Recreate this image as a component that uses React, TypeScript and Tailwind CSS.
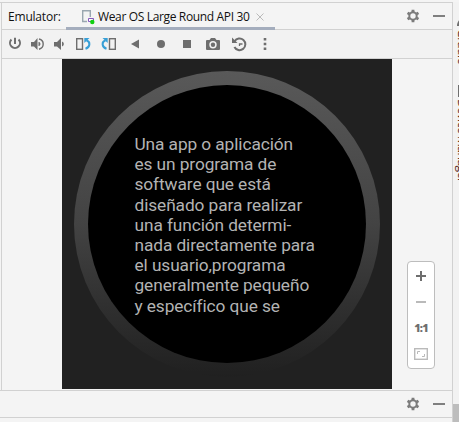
import type { ReactNode } from 'react';

const Icon = ({ children, className = '' }: { children: ReactNode; className?: string }) => (
  <svg viewBox="0 0 16 16" className={`block h-4 w-4 shrink-0 ${className}`} fill="none" stroke="none">
    {children}
  </svg>
);

const GREY = '#6e6e6e';

const PowerIcon = () => (
  <Icon>
    <path d="M4.400 3.500A5 5 0 1 0 11.600 3.500" stroke={GREY} strokeWidth="2" />
    <path d="M8 1.800V8" stroke={GREY} strokeWidth="2" />
  </Icon>
);

const VolumeUpIcon = () => (
  <Icon>
    <path d="M1 6h3l3.500-4v12L4 10.500H1z" fill={GREY} />
    <path d="M9 6.300a2 2 0 0 1 0 3.400z" fill={GREY} stroke={GREY} />
    <path d="M9 3a5.200 5.200 0 0 1 0 10.200" stroke={GREY} strokeWidth="1.400" />
  </Icon>
);

const VolumeDownIcon = () => (
  <Icon>
    <path d="M3 6h3l4-4v12l-4-3.500H3z" fill={GREY} />
    <path d="M11 5.500a2.600 2.600 0 0 1 0 5z" fill={GREY} />
  </Icon>
);

const RotateIcon = ({ flip = false }: { flip?: boolean }) => (
  <Icon>
    <g transform={flip ? 'translate(16 0) scale(-1 1)' : undefined}>
      <rect x="1.700" y="2.700" width="5.800" height="10.600" stroke={GREY} strokeWidth="1.400" />
      <path d="M11.500 4.500C15.500 5.500 15.500 11 10.500 12.800" stroke="#389fd6" strokeWidth="2" />
      <path d="M9.300 2h5.200l-5.200 5z" fill="#389fd6" />
    </g>
  </Icon>
);

const GearIcon = () => (
  <Icon>
    <circle cx="8" cy="8" r="3.700" stroke="#7b7b7b" strokeWidth="2" />
    {[0, 60, 120].map((angle) => (
      <path
        key={angle}
        d="M6.600 1.700h2.800v2.300H6.600zM6.600 12h2.800v2.300H6.600z"
        fill="#7b7b7b"
        transform={`rotate(${angle} 8 8)`}
      />
    ))}
  </Icon>
);

const HeaderActions = () => (
  <div className="ml-auto flex items-center pr-[7px]">
    <GearIcon />
    <div className="ml-3 h-0.5 w-3 bg-[#7f7f7f]" />
  </div>
);

const Header = () => (
  <div className="flex h-[27px] shrink-0 border-b border-[#d1d1d1] pl-1.5 text-[12px] text-[#111]">
    <span className="mt-[5px] w-[58px] leading-[18px] tracking-[-0.2px]">Emulator:</span>
    <div className="-mb-px flex h-[27px] w-[209px] border-b-[3px] border-[#a4adbd] pl-[15px]">
      <svg viewBox="0 0 14 16" className="mt-[6px] h-4 w-3.5 shrink-0" fill="none">
        <path d="M6 12.500H1.700V1.700h7.600V8" stroke="#9aa7b0" strokeWidth="1.400" />
        <path d="M7.500 12.500V9.500h5v3z" stroke="#8557bd" fill="#fff" />
        <circle cx="11.300" cy="13" r="2.200" fill="#10d010" />
      </svg>
      <span className="ml-[3px] mt-[5px] w-[152px] whitespace-nowrap leading-[18px] tracking-[-0.350px]">
        Wear OS Large Round API 30
      </span>
      <svg viewBox="0 0 8 8" className="ml-[6px] mt-2.5 h-2 w-2 shrink-0">
        <path d="M.5.5l7 7M7.500.5l-7 7" stroke="#bababa" />
      </svg>
    </div>
    <HeaderActions />
  </div>
);

const Toolbar = () => (
  <div className="flex h-[29px] shrink-0 items-center gap-2.5 border-b border-[#d1d1d1] bg-[#f2f2f2] pl-[5px]">
    <PowerIcon />
    <div className="-ml-[3px] flex gap-[5px]">
      <VolumeUpIcon />
      <VolumeDownIcon />
    </div>
    <div className="-ml-0.5 flex gap-2.5">
      <RotateIcon />
      <RotateIcon flip />
    </div>
    <Icon>
      <path d="M12 3.500v9L4 8z" fill={GREY} />
    </Icon>
    <Icon>
      <circle cx="8" cy="8" r="4" fill={GREY} />
    </Icon>
    <Icon>
      <rect x="4" y="4" width="8" height="8" fill={GREY} />
    </Icon>
    <Icon>
      <path
        fillRule="evenodd"
        d="M2 4h2.500L6 2h4l1.500 2H14a1 1 0 0 1 1 1v8a1 1 0 0 1-1 1H2a1 1 0 0 1-1-1V5a1 1 0 0 1 1-1zM8 5a3.700 3.700 0 1 0 0 7.400A3.700 3.700 0 0 0 8 5z"
        fill={GREY}
      />
      <circle cx="8" cy="8.700" r="2.200" fill={GREY} />
    </Icon>
    <Icon>
      <path d="M3.600 5.300A5.800 5.800 0 1 1 3.400 11" stroke={GREY} strokeWidth="2" />
      <path d="M1 1.500V7h5.500z" fill={GREY} />
      <path d="M8.500 10V8h3" stroke={GREY} strokeWidth="1.300" />
    </Icon>
    <Icon>
      <path d="M6.700 2h2.600v2.600H6.700zM6.700 6.700h2.600v2.600H6.700zM6.700 11.400h2.600V14H6.700z" fill={GREY} />
    </Icon>
  </div>
);

const LINES = [
  'Una app o aplicación',
  'es un programa de',
  'software que está',
  'diseñado para realizar',
  'una función determi-',
  'nada directamente para',
  'el usuario,programa',
  'generalmente pequeño',
  'y específico que se',
];

const WatchScreen = () => (
  <div className="ml-[60px] h-[330px] w-[330px] shrink-0 bg-[#212121] pl-[12px] pt-[12px]">
    <div className="h-[306px] w-[306px] rounded-full bg-linear-to-b from-[#595959] via-[#434343] to-[#202020] p-[14px]">
      <div className="h-[278px] w-[278px] rounded-full bg-black pl-[46.500px] pt-[49px] font-[Roboto,sans-serif] text-[17.300px] leading-[20.200px] tracking-[-0.090px] text-[#b3b3b3]">
        {LINES.map((line) => (
          <div key={line} className="whitespace-nowrap">
            {line}
          </div>
        ))}
      </div>
    </div>
  </div>
);

const ZoomControls = () => (
  <div className="ml-[15px] mt-[202px] flex h-[108px] w-7 shrink-0 flex-col items-center rounded-[4px] border border-[#bdbdbd] bg-white">
    <svg viewBox="0 0 10 10" className="mt-[9px] h-2.5 w-2.5">
      <path d="M0 5h10M5 0v10" stroke={GREY} strokeWidth="2" />
    </svg>
    <div className="mt-5 h-0.5 w-2.5 bg-[#bababa]" />
    <div className="mt-[17px] text-[11px] font-extrabold leading-[16px] tracking-[-0.8px] text-[#6e6e6e]">1:1</div>
    <svg viewBox="0 0 14 12" className="mt-[12px] h-3 w-3.5" fill="none" stroke="#bababa">
      <rect x=".7" y=".7" width="12.600" height="10.600" strokeWidth="1.400" />
      <path d="M3.500 6V3.500H6M8 8.500h2.500V6" />
    </svg>
  </div>
);

const SideBar = () => (
  <div className="flex w-[7px] shrink-0 flex-col overflow-hidden border-l border-[#d1d1d1] bg-[#f2f2f2] text-[12px] text-[#552719]">
    <svg viewBox="0 0 4 10" className="ml-1 mt-[15px] h-2.5 w-1 shrink-0">
      <path d="M0 9c0-4 2-6 4-8v4L2 9z" fill={GREY} />
    </svg>
    <div className="mt-[2px] h-[55px] w-[18px] whitespace-nowrap leading-[18px] tracking-[-0.4px] [writing-mode:vertical-rl]">
      Gradle
    </div>
    <div className="ml-[5px] mt-[1px] h-3 w-1 shrink-0 bg-[#6e6e6e]" />
    <div className="mt-[2px] h-[92px] w-[18px] whitespace-nowrap leading-[18px] tracking-[-0.450px] [writing-mode:vertical-rl]">
      Device Manager
    </div>
    <div className="-ml-px mt-auto h-[18px] w-[7px] shrink-0 bg-[#bdbdbd]" />
  </div>
);

export default function App() {
  return (
    <div className="flex h-[422px] w-[459px] flex-col overflow-hidden bg-[#f4f4f4] pt-0.5 font-['Open_Sans',sans-serif]">
      <div className="flex min-h-0 flex-1">
        <div className="flex w-[452px] shrink-0 flex-col border-t border-[#d1d1d1]">
          <div className="ml-px flex h-[387px] shrink-0 flex-col border-l border-[#d1d1d1]">
            <Header />
            <Toolbar />
            <div className="flex">
              <WatchScreen />
              <ZoomControls />
            </div>
          </div>
          <div className="flex h-7 shrink-0 border-y border-[#d1d1d1]">
            <HeaderActions />
          </div>
          <div className="flex-1 bg-[#f4f4f4]" />
        </div>
        <SideBar />
      </div>
    </div>
  );
}
